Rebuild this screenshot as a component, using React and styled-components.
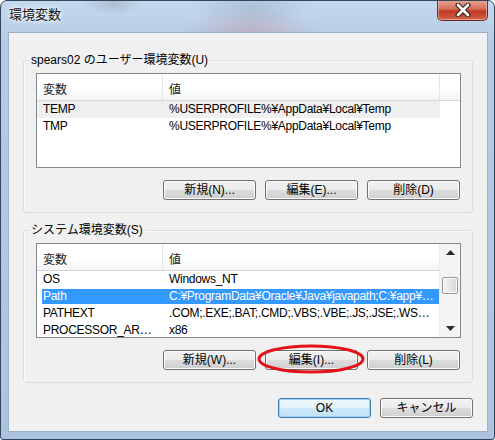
import React from 'react'
import styled, { createGlobalStyle } from 'styled-components'

const GlobalStyle = createGlobalStyle`
  html, body {
    margin: 0;
    padding: 0;
    background: #ffffff;
  }
  body {
    font-family: "Liberation Sans", "Noto Sans CJK JP", sans-serif;
    font-size: 12px;
    color: #000;
  }
`

const userVars = [
  { name: 'TEMP', value: '%USERPROFILE%¥AppData¥Local¥Temp', hover: true },
  { name: 'TMP', value: '%USERPROFILE%¥AppData¥Local¥Temp' },
]

const systemVars = [
  { name: 'OS', value: 'Windows_NT' },
  { name: 'Path', value: 'C:¥ProgramData¥Oracle¥Java¥javapath;C:¥app¥product¥11.2.0¥client_1¥bin', selected: true },
  { name: 'PATHEXT', value: '.COM;.EXE;.BAT;.CMD;.VBS;.VBE;.JS;.JSE;.WSF;.WSH;.MSC' },
  { name: 'PROCESSOR_ARCHITECTURE', value: 'x86' },
]

const App = () => {
  return (
    <>
      <GlobalStyle />
      <Window>
        <TitleBar>
          <Title>環境変数</Title>
          <CloseButton>
            <svg width="20" height="14" viewBox="0 0 20 14">
              <path d="M5 2 L15 12 M15 2 L5 12" stroke="#3a2a2a" strokeWidth="5" strokeLinecap="round" />
              <path d="M5 2 L15 12 M15 2 L5 12" stroke="#ffffff" strokeWidth="2.6" strokeLinecap="round" />
            </svg>
          </CloseButton>
        </TitleBar>

        <Client>
          <Group>
            <GroupLabel>spears02 のユーザー環境変数(U)</GroupLabel>
            <ListView>
              <ListBody>
                <HeaderRow>
                  <HeaderCell $w={126}>変数</HeaderCell>
                  <HeaderCell $w={277}>値</HeaderCell>
                  <HeaderFiller />
                </HeaderRow>
                {userVars.map((v) => (
                  <Row key={v.name} $hover={v.hover}>
                    <Cell $w={126}>{v.name}</Cell>
                    <Cell $w={277}>{v.value}</Cell>
                  </Row>
                ))}
              </ListBody>
            </ListView>
            <ButtonRow>
              <Button>新規(N)...</Button>
              <Button>編集(E)...</Button>
              <Button>削除(D)</Button>
            </ButtonRow>
          </Group>

          <Group $gap={17}>
            <GroupLabel>システム環境変数(S)</GroupLabel>
            <ListView>
              <ListBody>
                <HeaderRow>
                  <HeaderCell $w={126}>変数</HeaderCell>
                  <HeaderCell $w={277}>値</HeaderCell>
                </HeaderRow>
                {systemVars.map((v) => (
                  <Row key={v.name} $selected={v.selected}>
                    <Cell $w={126}>{v.name}</Cell>
                    <Cell $w={277}>{v.value}</Cell>
                  </Row>
                ))}
              </ListBody>
              <ScrollBar>
                <ArrowBox>
                  <svg width="9" height="5" viewBox="0 0 9 5"><path d="M0 5 L4.5 0 L9 5 Z" fill="#2b2b2b" /></svg>
                </ArrowBox>
                <Track>
                  <Thumb />
                </Track>
                <ArrowBox>
                  <svg width="9" height="5" viewBox="0 0 9 5"><path d="M0 0 L9 0 L4.5 5 Z" fill="#2b2b2b" /></svg>
                </ArrowBox>
              </ScrollBar>
            </ListView>
            <ButtonRow>
              <Button>新規(W)...</Button>
              <Marked>
                <Button>編集(I)...</Button>
                <Ellipse width="108" height="30" viewBox="0 0 108 30">
                  <ellipse cx="54" cy="15" rx="52" ry="13" fill="none" stroke="#e2121b" strokeWidth="3" />
                </Ellipse>
              </Marked>
              <Button>削除(L)</Button>
            </ButtonRow>
          </Group>

          <Footer>
            <Button $primary>OK</Button>
            <Button>キャンセル</Button>
          </Footer>
        </Client>
      </Window>
    </>
  )
}

const Window = styled.div`
  width: 495px;
  height: 440px;
  box-sizing: border-box;
  border: 1px solid #34465a;
  border-radius: 7px 7px 3px 3px;
  overflow: hidden;
  display: flex;
  flex-direction: column;
  background:
    radial-gradient(ellipse 70px 22px at 250px 30px, rgba(196, 120, 128, 0.35), transparent),
    radial-gradient(ellipse 60px 20px at 250px 6px, rgba(120, 140, 160, 0.3), transparent),
    radial-gradient(ellipse 30px 12px at 112px 2px, rgba(130, 140, 150, 0.35), transparent),
    linear-gradient(#c4d9ee, #b4cce6 40px, #aac4e0);
`

const TitleBar = styled.div`
  height: 31px;
  flex-shrink: 0;
  display: flex;
  justify-content: space-between;
  align-items: flex-start;
  padding: 0 6px 0 8px;
`

const Title = styled.div`
  margin-top: 6px;
  font-size: 13px;
  line-height: 16px;
  color: #111;
  text-shadow: 0 0 6px #ffffff, 0 0 3px #ffffff;
`

const CloseButton = styled.div`
  width: 51px;
  height: 21px;
  margin-top: -1px;
  box-sizing: border-box;
  border: 1px solid #6b2a20;
  border-top: none;
  border-radius: 0 0 5px 5px;
  display: flex;
  align-items: center;
  justify-content: center;
  background: linear-gradient(#e8a493 0%, #d56e58 45%, #c0391f 55%, #d2624a 100%);
  box-shadow: inset 0 0 0 1px rgba(255, 220, 210, 0.5);
`

const Client = styled.div`
  flex: 1;
  margin: 0 6px 7px 7px;
  border: 1px solid #9cb0c4;
  background: #f0f0f0;
  display: flex;
  flex-direction: column;
  padding: 27px 14px 0 14px;
`

const Group = styled.div`
  margin-top: ${(p) => p.$gap || 0}px;
  border: 1px solid #d5dfe5;
  border-radius: 3px;
  box-shadow: inset 1px 1px 0 #fbfbfb;
  display: flex;
  flex-direction: column;
  padding: 0 11px 12px 12px;
`

const GroupLabel = styled.div`
  align-self: flex-start;
  margin: -8px 0 0 -7px;
  padding: 0 2px;
  line-height: 14px;
  background: #f0f0f0;
`

const ListView = styled.div`
  margin-top: 6px;
  height: 95px;
  box-sizing: border-box;
  border: 1px solid #828790;
  background: #ffffff;
  display: flex;
  overflow: hidden;
`

const ListBody = styled.div`
  flex: 1;
  display: flex;
  flex-direction: column;
  min-width: 0;
`

const HeaderRow = styled.div`
  height: 26px;
  flex-shrink: 0;
  display: flex;
  border-bottom: 1px solid #d5d5d5;
  background: linear-gradient(#ffffff 0%, #ffffff 55%, #f3f4f6 100%);
`

const HeaderCell = styled.div`
  width: ${(p) => p.$w}px;
  box-sizing: border-box;
  flex-shrink: 0;
  padding: 3px 0 0 6px;
  display: flex;
  align-items: center;
  border-right: 1px solid #e3e5e8;
  color: #1a1a1a;
`

const HeaderFiller = styled.div`
  flex: 1;
`

const Row = styled.div`
  height: 17px;
  flex-shrink: 0;
  display: flex;
  align-self: flex-start;
  color: ${(p) => (p.$selected ? '#ffffff' : '#000000')};
  background: ${(p) =>
    p.$selected
      ? 'linear-gradient(to right, transparent 5px, #3399ff 5px) 0 1px / 100% 15px no-repeat'
      : p.$hover
      ? '#efefef'
      : 'transparent'};
`

const Cell = styled.div`
  width: ${(p) => p.$w}px;
  box-sizing: border-box;
  flex-shrink: 0;
  padding: 0 6px;
  line-height: 17px;
  letter-spacing: -0.28px;
  white-space: nowrap;
  overflow: hidden;
  text-overflow: ellipsis;
`

const ScrollBar = styled.div`
  width: 20px;
  flex-shrink: 0;
  display: flex;
  flex-direction: column;
  background: #f4f4f4;
  border-left: 1px solid #ececec;
`

const ArrowBox = styled.div`
  height: 17px;
  display: flex;
  align-items: center;
  justify-content: center;
`

const Track = styled.div`
  flex: 1;
  display: flex;
  flex-direction: column;
  align-items: center;
`

const Thumb = styled.div`
  margin-top: 16px;
  width: 16px;
  height: 17px;
  box-sizing: border-box;
  border: 1px solid #979797;
  border-radius: 2px;
  background: linear-gradient(to right, #f5f5f5, #e4e4e4 60%, #d6d6d6);
  box-shadow: inset 0 0 0 1px #fafafa;
`

const ButtonRow = styled.div`
  margin-top: 12px;
  padding-right: 1px;
  display: flex;
  justify-content: flex-end;
  gap: 9px;
`

const Marked = styled.div`
  position: relative;
  display: flex;
`

const Ellipse = styled.svg`
  position: absolute;
  left: -8px;
  top: -6px;
  pointer-events: none;
`

const Footer = styled.div`
  margin-top: 15px;
  display: flex;
  justify-content: flex-end;
  gap: 9px;
`

const Button = styled.div`
  width: 93px;
  height: 20px;
  box-sizing: border-box;
  border: 1px solid ${(p) => (p.$primary ? '#3c7fb1' : '#707070')};
  border-radius: 3px;
  display: flex;
  align-items: center;
  justify-content: center;
  font-size: 12px;
  line-height: 14px;
  color: #000;
  background: ${(p) =>
    p.$primary
      ? 'linear-gradient(#f1f9fe 0%, #e3f3fc 50%, #cfeafa 50%, #bfe2f6 100%)'
      : 'linear-gradient(#f2f2f2 0%, #ebebeb 50%, #dddddd 50%, #cfcfcf 100%)'};
  box-shadow: inset 0 0 0 1px ${(p) => (p.$primary ? '#9fd2ef' : '#fcfcfc')};
`

export default App
